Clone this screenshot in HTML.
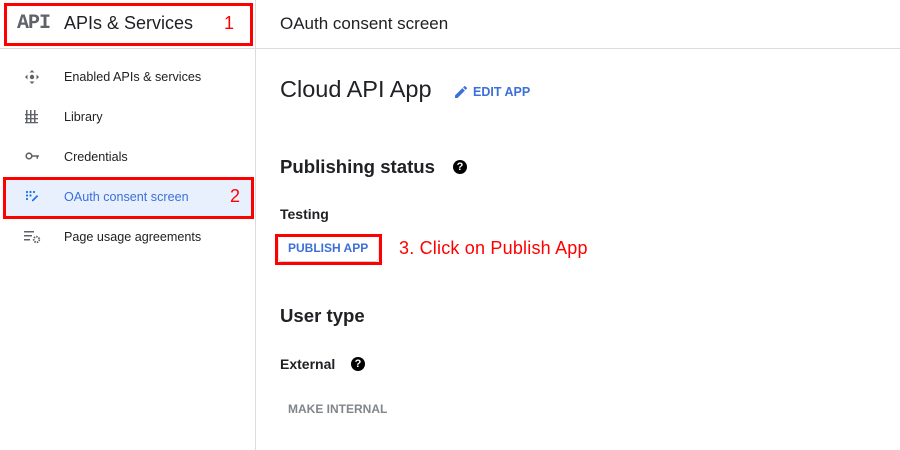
<!DOCTYPE html><html><head><style>
body{margin:0;width:900px;height:450px;background:#fff;font-family:"Liberation Sans",Arial,sans-serif;position:relative;overflow:hidden;color:#202124}
.a{position:absolute;white-space:nowrap}
.box{position:absolute;border:3px solid #f00;box-sizing:border-box}
</style></head><body>
<div class="a" style="left:255px;top:0;width:1px;height:450px;background:#dadce0"></div>
<div class="a" style="left:0;top:48px;width:900px;height:1px;background:#dadce0"></div>
<div class="a" style="left:17px;top:12px;font-family:'Liberation Mono',monospace;font-weight:bold;font-size:20px;color:#5f6368;letter-spacing:-1px">API</div>
<div class="a" style="left:64px;top:13px;font-size:18px">APIs &amp; Services</div>
<div class="a" style="left:224px;top:13px;font-size:18px;color:#f00">1</div>
<div class="box" style="left:4px;top:3px;width:249px;height:43px"></div>
<div class="a" style="left:280px;top:14px;font-size:17px">OAuth consent screen</div>

<div class="a" style="left:3px;top:178px;width:250px;height:40px;background:#e8f0fe"></div>
<svg class="a" style="left:24px;top:69px" width="16" height="16" viewBox="0 0 16 16" fill="#5f6368"><path d="M8 1l2.5 2.5h-5zM8 15l2.5-2.5h-5zM1 8l2.5-2.5v5zM15 8l-2.5-2.5v5z"/><circle cx="8" cy="8" r="2.2"/></svg>
<svg class="a" style="left:25px;top:109px" width="14" height="15" viewBox="0 0 14 15" fill="#5f6368"><rect x="1" y="1" width="1.5" height="13"/><rect x="5" y="1" width="1.5" height="13"/><rect x="9" y="1" width="1.5" height="13"/><rect x="0" y="5" width="13" height="1.3"/><rect x="0" y="9" width="13" height="1.3"/><rect x="0" y="13" width="13" height="1.3"/></svg>
<svg class="a" style="left:25px;top:151px" width="15" height="10" viewBox="0 0 15 10"><circle cx="4" cy="5" r="2.8" fill="none" stroke="#5f6368" stroke-width="1.6"/><path d="M7 4.2h7v1.6h-1v2h-1.5v-2H7z" fill="#5f6368"/></svg>
<svg class="a" style="left:25px;top:190px" width="14" height="13" viewBox="0 0 14 13" fill="#1a73e8"><circle cx="2" cy="2" r="1.1"/><circle cx="5.5" cy="2" r="1.1"/><circle cx="9" cy="2" r="1.1"/><circle cx="2" cy="5.5" r="1.1"/><circle cx="5.5" cy="5.5" r="1.1"/><circle cx="2" cy="9" r="1.1"/><path d="M7 10l5-5 1.2 1.2-5 5H7z"/></svg>
<svg class="a" style="left:24px;top:230px" width="17" height="14" viewBox="0 0 17 14" fill="#5f6368"><rect x="0" y="1" width="10" height="1.5"/><rect x="0" y="5" width="8" height="1.5"/><rect x="0" y="9" width="6" height="1.5"/><circle cx="12.5" cy="9.5" r="2.8" fill="none" stroke="#5f6368" stroke-width="1.8" stroke-dasharray="1.5 1"/></svg>
<div class="a" style="left:64px;top:70px;font-size:12.6px">Enabled APIs &amp; services</div>
<div class="a" style="left:64px;top:110px;font-size:12.6px">Library</div>
<div class="a" style="left:64px;top:150px;font-size:12.6px">Credentials</div>
<div class="a" style="left:64px;top:190px;font-size:12.6px;color:#3c6fd8">OAuth consent screen</div>
<div class="a" style="left:230px;top:186px;font-size:18px;color:#f00">2</div>
<div class="a" style="left:64px;top:230px;font-size:12.6px">Page usage agreements</div>
<div class="box" style="left:3px;top:177px;width:251px;height:42px"></div>

<div class="a" style="left:280px;top:76px;font-size:23.5px">Cloud API App</div>
<svg class="a" style="left:453px;top:84px" width="16" height="16" viewBox="0 0 24 24"><path fill="#3c6fd8" d="M3 17.25V21h3.75L17.81 9.94l-3.75-3.75L3 17.25zM20.71 7.04a1 1 0 000-1.41l-2.34-2.34a1 1 0 00-1.41 0l-1.83 1.83 3.75 3.75 1.83-1.83z"/></svg>
<div class="a" style="left:473px;top:85px;font-size:12.5px;font-weight:bold;color:#3c6fd8">EDIT APP</div>
<div class="a" style="left:280px;top:156px;font-size:18.6px;font-weight:bold">Publishing status</div>
<div class="a" style="left:453px;top:160px;width:14px;height:14px;border-radius:50%;background:#000;color:#fff;font-size:11px;font-weight:bold;text-align:center;line-height:14px">?</div>
<div class="a" style="left:280px;top:206px;font-size:14px;font-weight:bold">Testing</div>
<div class="a" style="left:279px;top:237px;width:99px;height:24px;border-radius:3px;box-shadow:0 1px 2px rgba(0,0,0,.3)"></div>
<div class="a" style="left:288px;top:241px;font-size:12px;font-weight:bold;color:#3c6fd8">PUBLISH APP</div>
<div class="box" style="left:275px;top:234px;width:107px;height:31px"></div>
<div class="a" style="left:399px;top:238px;font-size:18px;color:#f00;letter-spacing:0.2px">3. Click on Publish App</div>
<div class="a" style="left:280px;top:305px;font-size:18.6px;font-weight:bold">User type</div>
<div class="a" style="left:280px;top:356px;font-size:14px;font-weight:bold">External</div>
<div class="a" style="left:351px;top:357px;width:14px;height:14px;border-radius:50%;background:#000;color:#fff;font-size:11px;font-weight:bold;text-align:center;line-height:14px">?</div>
<div class="a" style="left:288px;top:402px;font-size:12px;font-weight:bold;color:#80868b">MAKE INTERNAL</div>
</body></html>
